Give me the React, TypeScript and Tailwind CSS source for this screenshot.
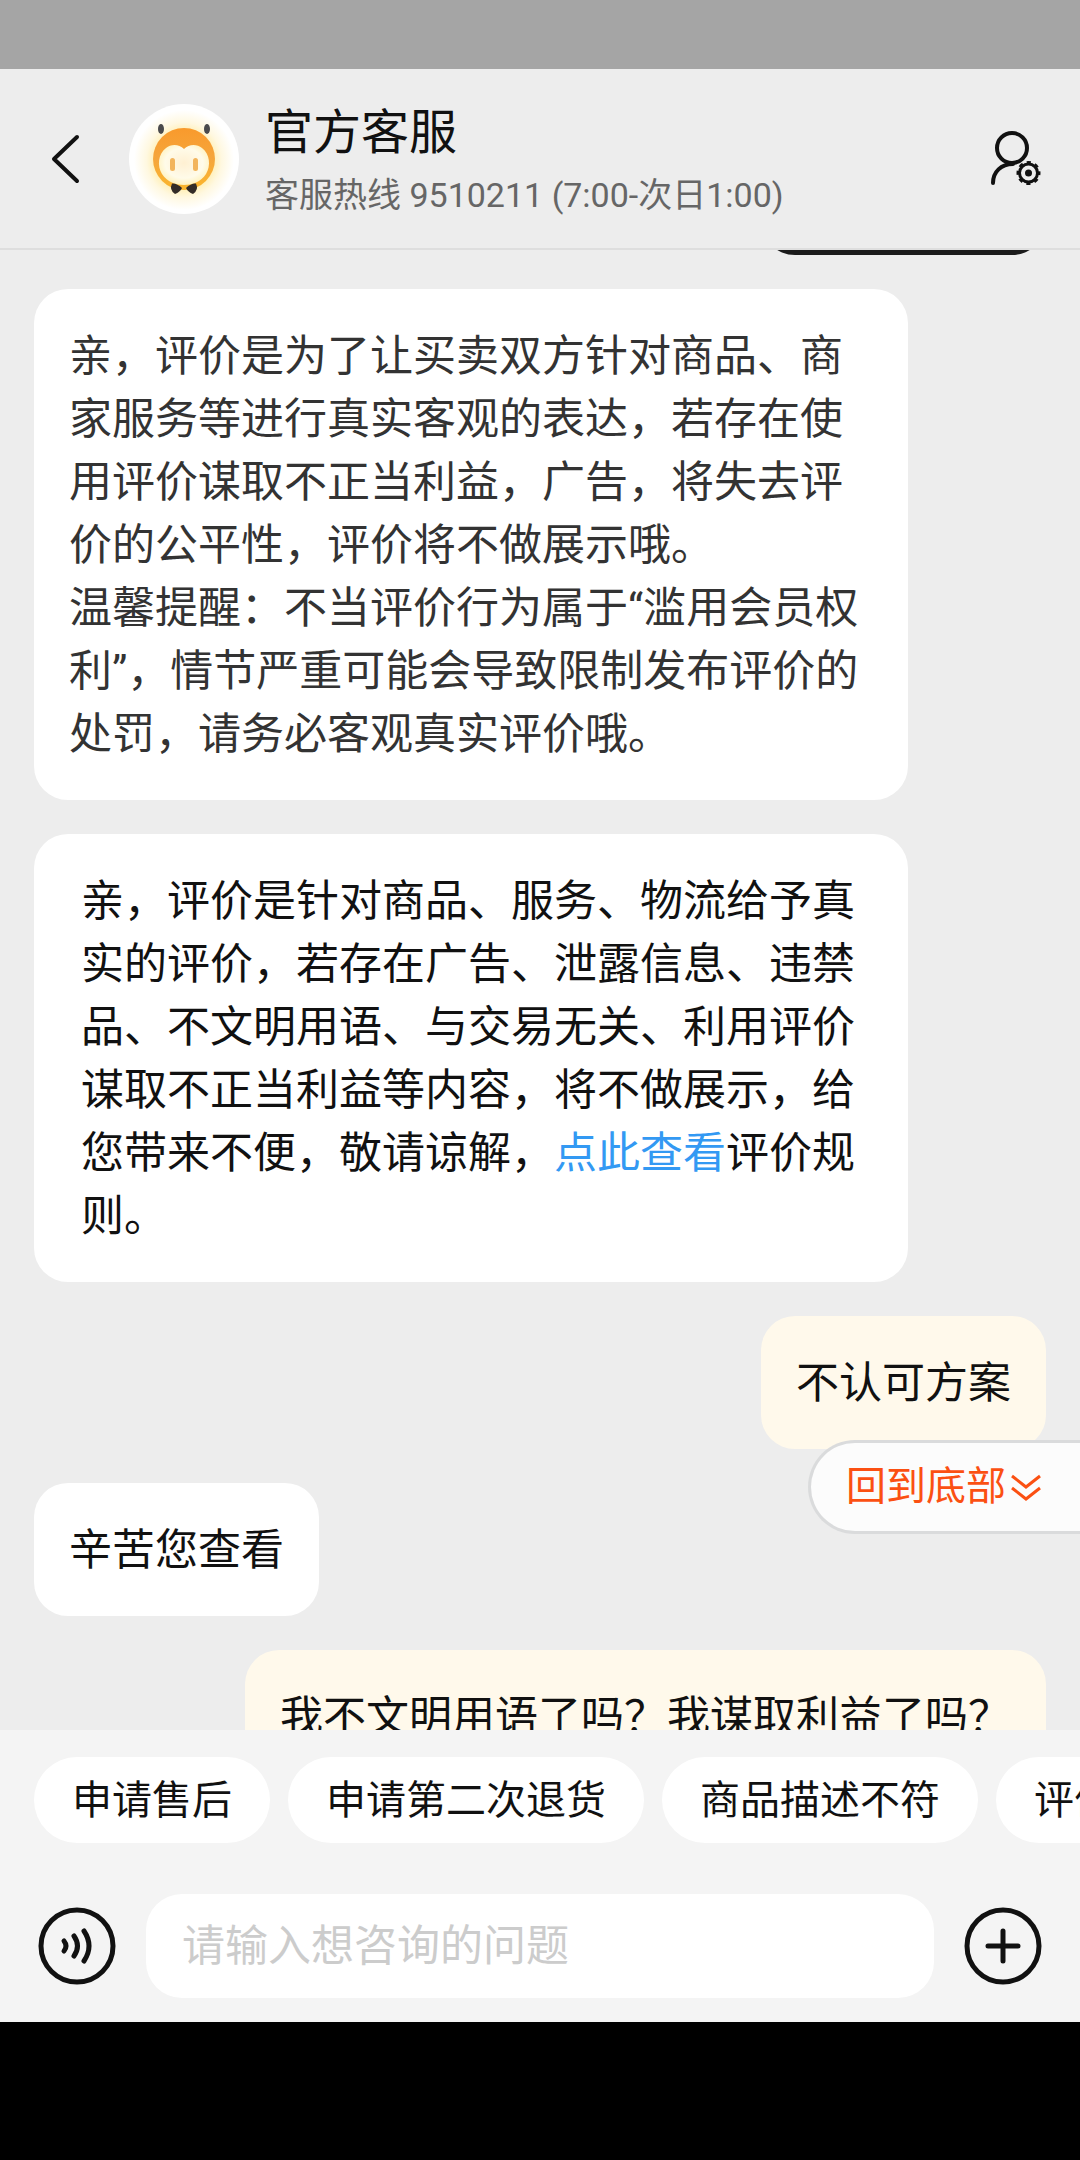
import React, { useState } from 'react';
import clsx from 'clsx';

type Message = {
  id: number;
  from: 'service' | 'me';
  body: React.ReactNode;
  tone?: string;
  rich?: boolean;
};

const messages: Message[] = [
  {
    id: 1,
    from: 'service',
    tone: 'text-[#333333]',
    body: (
      <>
        亲，评价是为了让买卖双方针对商品、商家服务等进行真实客观的表达，若存在使用评价谋取不正当利益，广告，将失去评价的公平性，评价将不做展示哦。
        <br />
        温馨提醒：不当评价行为属于“滥用会员权利”，情节严重可能会导致限制发布评价的处罚，请务必客观真实评价哦。
      </>
    ),
  },
  {
    id: 2,
    from: 'service',
    rich: true,
    body: (
      <>
        亲，评价是针对商品、服务、物流给予真实的评价，若存在广告、泄露信息、违禁品、不文明用语、与交易无关、利用评价谋取不正当利益等内容，将不做展示，给您带来不便，敬请谅解，
        <a href="#rules" className="text-[#3399f3]">点此查看</a>
        评价规则。
      </>
    ),
  },
  { id: 3, from: 'me', body: '不认可方案' },
  { id: 4, from: 'service', body: '辛苦您查看' },
  { id: 5, from: 'me', body: '我不文明用语了吗？我谋取利益了吗？' },
];

const quickReplies = ['申请售后', '申请第二次退货', '商品描述不符', '评价规则'];

function Avatar() {
  return (
    <svg viewBox="0 0 110 110" className="size-[110px] shrink-0" role="img" aria-label="官方客服">
      <defs>
        <radialGradient id="glow" cx="50%" cy="50%" r="50%">
          <stop offset="0.55" stopColor="#ffeeb0" />
          <stop offset="0.75" stopColor="#fff8e0" />
          <stop offset="1" stopColor="#ffffff" />
        </radialGradient>
        <linearGradient id="head" x1="0" y1="0" x2="0" y2="1">
          <stop offset="0" stopColor="#f99a2c" />
          <stop offset="0.5" stopColor="#f5a63c" />
          <stop offset="1" stopColor="#fbb62c" />
        </linearGradient>
        <radialGradient id="face" cx="50%" cy="45%" r="58%">
          <stop offset="0" stopColor="#fff0d2" />
          <stop offset="0.65" stopColor="#fffbe9" />
          <stop offset="1" stopColor="#fff1b8" />
        </radialGradient>
      </defs>
      <circle cx="55" cy="55" r="55" fill="#ffffff" />
      <circle cx="55" cy="56" r="50" fill="url(#glow)" />
      <ellipse cx="32" cy="25" rx="3" ry="5" fill="#4a4a4c" />
      <ellipse cx="78" cy="25" rx="3" ry="5" fill="#4a4a4c" />
      <circle cx="55" cy="55" r="31" fill="url(#head)" />
      <path
        d="M55 45C50 40 42 40 37 44C29 50 28 62 33 70C38 78 47 81 55 81C63 81 72 78 77 70C82 62 81 50 73 44C68 40 60 40 55 45Z"
        fill="url(#face)"
      />
      <rect x="41" y="54" width="5" height="13" rx="2.5" fill="#f2b45c" />
      <rect x="64" y="54" width="5" height="13" rx="2.5" fill="#f2b45c" />
      <path d="M43 79.5Q48 79 53 84Q51 88 46 90Q40 86 43 79.5Z" fill="#332c28" />
      <path d="M67 79.5Q62 79 57 84Q59 88 64 90Q70 86 67 79.5Z" fill="#332c28" />
    </svg>
  );
}

function BackIcon() {
  return (
    <svg viewBox="0 0 30 50" className="h-[50px] w-[30px]" fill="none" stroke="#111111" strokeWidth="4" strokeLinecap="round" strokeLinejoin="round">
      <path d="M27 3L4 25L27 47" />
    </svg>
  );
}

function UserSettingsIcon() {
  return (
    <svg viewBox="0 0 52 56" className="h-[56px] w-[52px]" fill="none" stroke="#111111" strokeLinecap="round" strokeLinejoin="round">
      <circle cx="22" cy="17" r="15" strokeWidth="4" />
      <path d="M23 33C11 33 3 41 3 52" strokeWidth="4" />
      {/* Scalloped gear: eight teeth around the dot */}
      <circle cx="38.5" cy="42" r="9" strokeWidth="3" />
      <circle cx="38.5" cy="42" r="10.5" strokeWidth="3" strokeLinecap="butt" strokeDasharray="4.12 4.12" strokeDashoffset="2.06" />
      <circle cx="38.5" cy="42" r="3.5" fill="#111111" stroke="none" />
    </svg>
  );
}

function VoiceIcon() {
  return (
    <svg viewBox="0 0 78 78" className="size-[78px]" fill="none" stroke="#111111" strokeWidth="5" strokeLinecap="round">
      <circle cx="39" cy="39" r="36" />
      <path d="M26 34Q30 39 26 44" />
      <path d="M36 29Q43 39 36 49" />
      <path d="M46 24Q56 39 46 54" />
    </svg>
  );
}

function PlusIcon() {
  return (
    <svg viewBox="0 0 78 78" className="size-[78px]" fill="none" stroke="#111111" strokeWidth="5" strokeLinecap="round">
      <circle cx="39" cy="39" r="36" />
      <path d="M39 24V54M24 39H54" />
    </svg>
  );
}

function Bubble({ message }: { message: Message }) {
  const mine = message.from === 'me';
  return (
    <div
      className={clsx(
        'max-w-[874px] rounded-[34px] pt-9 pb-[34px] text-[43px] leading-[63px]',
        mine ? 'self-end bg-[#fff9eb]' : 'self-start bg-white',
        message.rich ? 'px-[47px]' : 'px-[35px]',
        message.tone ?? 'text-[#111111]'
      )}
    >
      {message.body}
    </div>
  );
}

export default function App() {
  const [draft, setDraft] = useState('');

  return (
    <div className="flex h-screen flex-col overflow-hidden bg-[#ededed] font-[Roboto,'Noto_Sans_CJK_SC',sans-serif] text-[#111111]">
      <div className="h-[69px] shrink-0 bg-[#a5a5a5]" />

      {/* Header */}
      <header className="flex h-[181px] shrink-0 items-center border-b-2 border-[#dedede] pr-[38px] pl-[50px]">
        <button type="button" aria-label="返回" className="shrink-0">
          <BackIcon />
        </button>
        <div className="ml-[49px] shrink-0">
          <Avatar />
        </div>
        <div className="ml-[26px] min-w-0 flex-1 pt-1.5">
          <h1 className="text-[48px] leading-[66px]">官方客服</h1>
          <p className="text-[34px] leading-[58px] whitespace-nowrap text-[#666666]">客服热线 9510211 (7:00-次日1:00)</p>
        </div>
        <button type="button" aria-label="用户设置" className="shrink-0">
          <UserSettingsIcon />
        </button>
      </header>

      {/* Conversation */}
      <div className="relative min-h-0 flex-1">
        <main className="flex h-full flex-col gap-[34px] overflow-hidden px-[34px]">
          {/* Tail of the picture message scrolled under the header */}
          <div className="flex h-[5px] shrink-0 items-end justify-end overflow-hidden">
            <div className="h-[120px] w-[285px] shrink-0 rounded-[34px] bg-[#1b1b1b]" />
          </div>
          {messages.map((message) => (
            <Bubble key={message.id} message={message} />
          ))}
        </main>

        <button
          type="button"
          className="absolute right-0 bottom-[196px] flex h-[94px] items-center gap-1 rounded-l-full border-[3px] border-r-0 border-[#dadbdc] bg-[#fcfcfc] pr-[38px] pl-[35px] text-[40px] leading-[58px] text-[#fb5012]"
        >
          回到底部
          <svg viewBox="0 0 32 30" className="h-[30px] w-[32px]" fill="none" stroke="#fb5012" strokeWidth="3">
            <path d="M2 4L16 15L30 4M2 16L16 27L30 16" />
          </svg>
        </button>
      </div>

      {/* Quick replies and input */}
      <footer className="shrink-0 bg-[#f4f4f4] pt-[27px] pb-6">
        <div className="flex gap-[18px] overflow-hidden pl-[34px]">
          {quickReplies.map((label) => (
            <button
              key={label}
              type="button"
              className="h-[86px] shrink-0 rounded-full bg-white px-[38px] pt-0.5 text-[40px] leading-[58px] whitespace-nowrap"
            >
              {label}
            </button>
          ))}
        </div>
        <form className="mt-[51px] flex items-center gap-[30px] px-[38px]" onSubmit={(e) => e.preventDefault()}>
          <button type="button" aria-label="语音输入" className="shrink-0">
            <VoiceIcon />
          </button>
          <input
            type="text"
            aria-label="咨询的问题"
            value={draft}
            onChange={(e) => setDraft(e.target.value)}
            placeholder="请输入想咨询的问题"
            className="h-[104px] min-w-0 flex-1 rounded-[36px] bg-white px-[36px] text-[43px] outline-none placeholder:text-[#cccccc]"
          />
          <button type="button" aria-label="更多" className="shrink-0">
            <PlusIcon />
          </button>
        </form>
      </footer>

      <div className="h-[138px] shrink-0 bg-black" />
    </div>
  );
}
